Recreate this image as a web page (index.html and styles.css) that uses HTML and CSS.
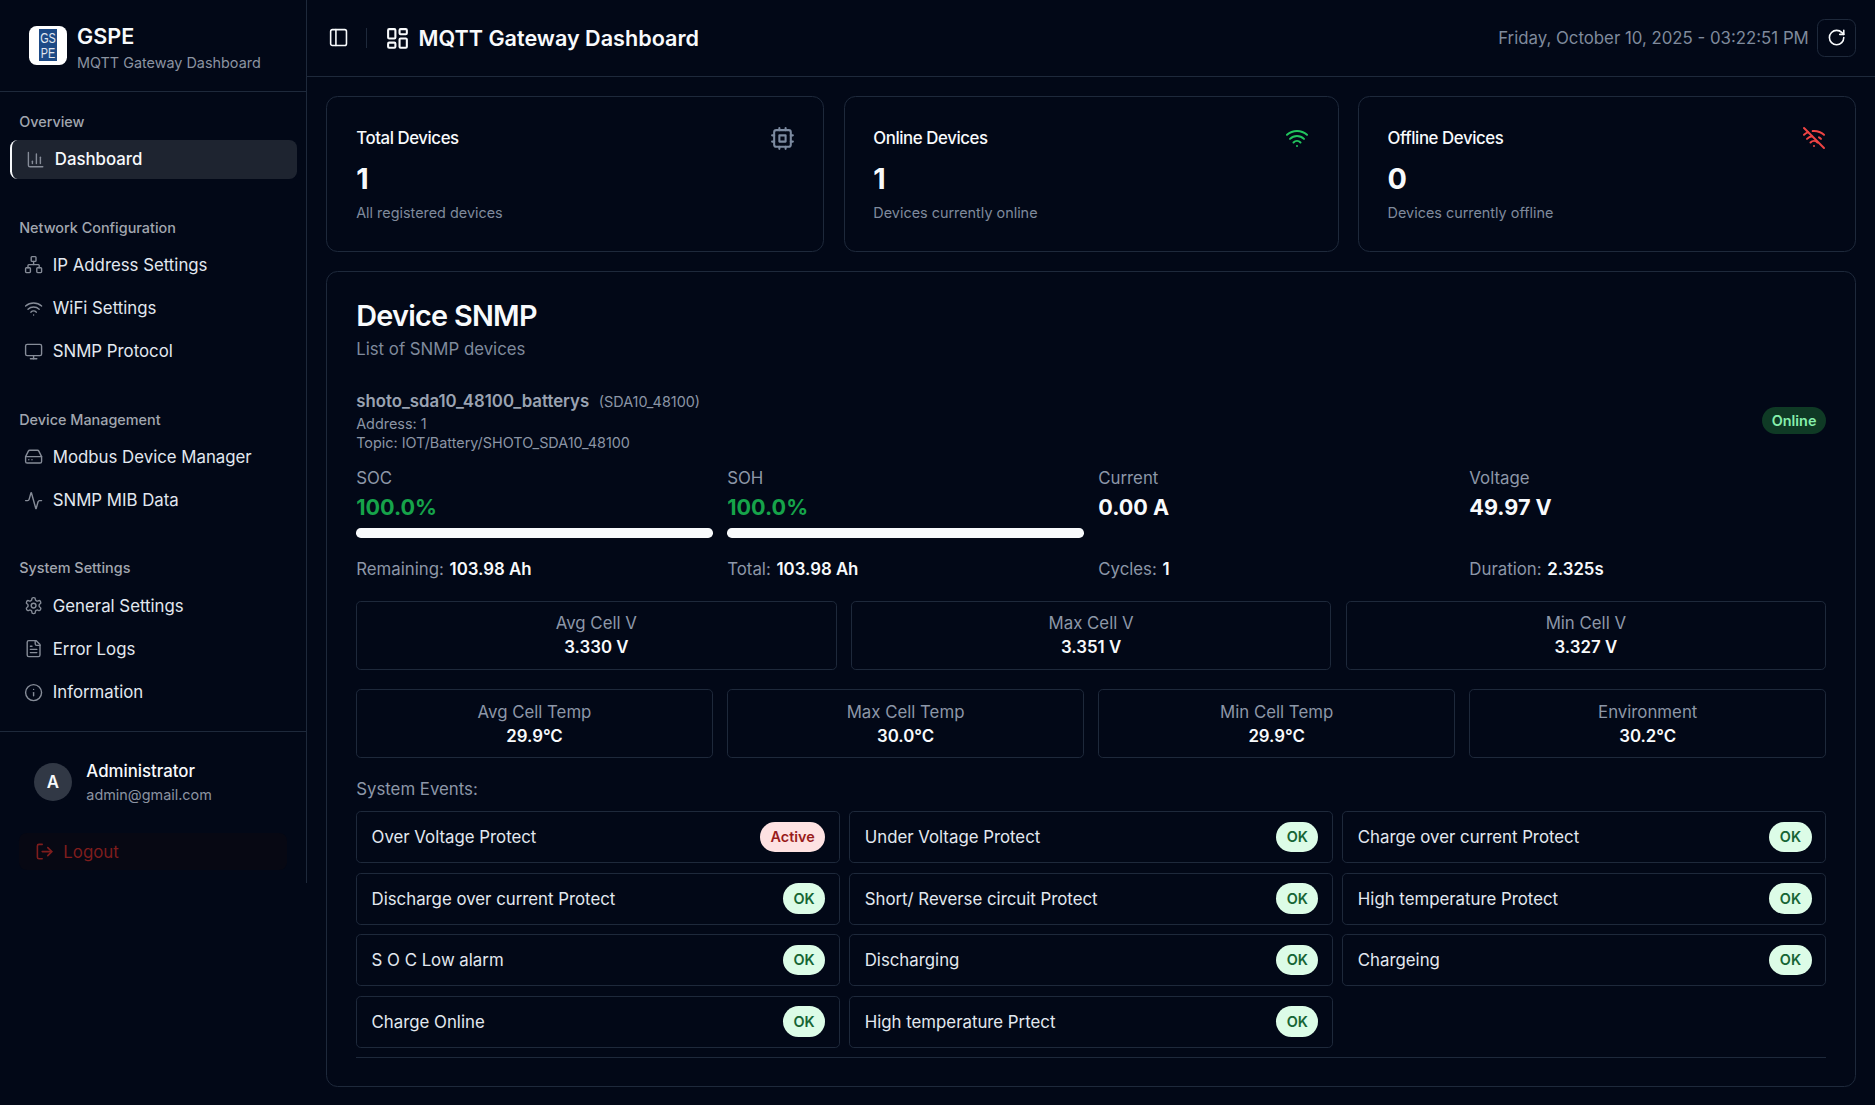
FILE: index.html
```html
<!DOCTYPE html>
<html lang="en">
<head>
    <meta charset="UTF-8">
    <meta name="viewport" content="width=device-width, initial-scale=1.0">
    <title>MQTT Gateway Dashboard</title>
    <link rel="stylesheet" href="styles.css">
</head>
<body>
    <svg class="sprite" width="0" height="0" aria-hidden="true">
        <symbol id="i-chart" viewBox="0 0 24 24"><path d="M3 3v16a2 2 0 0 0 2 2h16"/><path d="M18 17V9"/><path d="M13 17V5"/><path d="M8 17v-3"/></symbol>
        <symbol id="i-network" viewBox="0 0 24 24"><rect x="16" y="16" width="6" height="6" rx="1"/><rect x="2" y="16" width="6" height="6" rx="1"/><rect x="9" y="2" width="6" height="6" rx="1"/><path d="M5 16v-3a1 1 0 0 1 1-1h12a1 1 0 0 1 1 1v3"/><path d="M12 12V8"/></symbol>
        <symbol id="i-wifi" viewBox="0 0 24 24"><path d="M12 20h.01"/><path d="M2 8.82a15 15 0 0 1 20 0"/><path d="M5 12.859a10 10 0 0 1 14 0"/><path d="M8.5 16.429a5 5 0 0 1 7 0"/></symbol>
        <symbol id="i-wifi-off" viewBox="0 0 24 24"><path d="M12 20h.01"/><path d="M8.5 16.429a5 5 0 0 1 7 0"/><path d="M5 12.859a10 10 0 0 1 5.17-2.69"/><path d="M19 12.859a10 10 0 0 0-2.007-1.523"/><path d="M2 8.82a15 15 0 0 1 4.177-2.643"/><path d="M22 8.82a15 15 0 0 0-11.288-3.764"/><path d="m2 2 20 20"/></symbol>
        <symbol id="i-monitor" viewBox="0 0 24 24"><rect x="2" y="3" width="20" height="14" rx="2"/><path d="M8 21h8"/><path d="M12 17v4"/></symbol>
        <symbol id="i-drive" viewBox="0 0 24 24"><path d="M22 12H2"/><path d="M5.45 5.11 2 12v6a2 2 0 0 0 2 2h16a2 2 0 0 0 2-2v-6l-3.45-6.89A2 2 0 0 0 16.76 4H7.24a2 2 0 0 0-1.79 1.11z"/><path d="M6 16h.01"/><path d="M10 16h.01"/></symbol>
        <symbol id="i-activity" viewBox="0 0 24 24"><path d="M22 12h-2.48a2 2 0 0 0-1.93 1.46l-2.35 8.36a.25.25 0 0 1-.48 0L9.24 2.18a.25.25 0 0 0-.48 0l-2.35 8.36A2 2 0 0 1 4.49 12H2"/></symbol>
        <symbol id="i-settings" viewBox="0 0 24 24"><path d="M12.22 2h-.44a2 2 0 0 0-2 2v.18a2 2 0 0 1-1 1.73l-.43.25a2 2 0 0 1-2 0l-.15-.08a2 2 0 0 0-2.73.73l-.22.38a2 2 0 0 0 .73 2.73l.15.1a2 2 0 0 1 1 1.72v.51a2 2 0 0 1-1 1.74l-.15.09a2 2 0 0 0-.73 2.73l.22.38a2 2 0 0 0 2.73.73l.15-.08a2 2 0 0 1 2 0l.43.25a2 2 0 0 1 1 1.73V20a2 2 0 0 0 2 2h.44a2 2 0 0 0 2-2v-.18a2 2 0 0 1 1-1.73l.43-.25a2 2 0 0 1 2 0l.15.08a2 2 0 0 0 2.73-.73l.22-.39a2 2 0 0 0-.73-2.73l-.15-.08a2 2 0 0 1-1-1.74v-.5a2 2 0 0 1 1-1.74l.15-.09a2 2 0 0 0 .73-2.73l-.22-.38a2 2 0 0 0-2.73-.73l-.15.08a2 2 0 0 1-2 0l-.43-.25a2 2 0 0 1-1-1.73V4a2 2 0 0 0-2-2z"/><circle cx="12" cy="12" r="3"/></symbol>
        <symbol id="i-file" viewBox="0 0 24 24"><path d="M15 2H6a2 2 0 0 0-2 2v16a2 2 0 0 0 2 2h12a2 2 0 0 0 2-2V7Z"/><path d="M14 2v4a2 2 0 0 0 2 2h4"/><path d="M10 9H8"/><path d="M16 13H8"/><path d="M16 17H8"/></symbol>
        <symbol id="i-info" viewBox="0 0 24 24"><circle cx="12" cy="12" r="10"/><path d="M12 16v-4"/><path d="M12 8h.01"/></symbol>
        <symbol id="i-logout" viewBox="0 0 24 24"><path d="M9 21H5a2 2 0 0 1-2-2V5a2 2 0 0 1 2-2h4"/><path d="m16 17 5-5-5-5"/><path d="M21 12H9"/></symbol>
        <symbol id="i-panel" viewBox="0 0 24 24"><rect x="3" y="3" width="18" height="18" rx="2"/><path d="M9 3v18"/></symbol>
        <symbol id="i-layout" viewBox="0 0 24 24"><rect x="3" y="3" width="7" height="9" rx="1"/><rect x="14" y="3" width="7" height="5" rx="1"/><rect x="14" y="12" width="7" height="9" rx="1"/><rect x="3" y="16" width="7" height="5" rx="1"/></symbol>
        <symbol id="i-refresh" viewBox="0 0 24 24"><path d="M21 12a9 9 0 1 1-9-9c2.52 0 4.93 1 6.74 2.74L21 8"/><path d="M21 3v5h-5"/></symbol>
        <symbol id="i-cpu" viewBox="0 0 24 24"><rect x="4" y="4" width="16" height="16" rx="2"/><rect x="9" y="9" width="6" height="6"/><path d="M15 2v2"/><path d="M15 20v2"/><path d="M2 15h2"/><path d="M2 9h2"/><path d="M20 15h2"/><path d="M20 9h2"/><path d="M9 2v2"/><path d="M9 20v2"/></symbol>
    </svg>

    <div class="app">
        <aside class="sidebar">
            <div class="brand">
                <div class="logo"><div class="logo-mark"><span>GS<br>PE</span></div></div>
                <div class="brand-text">
                    <div class="brand-name">GSPE</div>
                    <div class="brand-sub">MQTT Gateway Dashboard</div>
                </div>
            </div>

            <nav class="nav">
                <div class="nav-group">
                    <div class="nav-label">Overview</div>
                    <a class="nav-item active"><svg class="icon"><use href="#i-chart"/></svg>Dashboard</a>
                </div>
                <div class="nav-group">
                    <div class="nav-label">Network Configuration</div>
                    <a class="nav-item"><svg class="icon"><use href="#i-network"/></svg>IP Address Settings</a>
                    <a class="nav-item"><svg class="icon"><use href="#i-wifi"/></svg>WiFi Settings</a>
                    <a class="nav-item"><svg class="icon"><use href="#i-monitor"/></svg>SNMP Protocol</a>
                </div>
                <div class="nav-group">
                    <div class="nav-label">Device Management</div>
                    <a class="nav-item"><svg class="icon"><use href="#i-drive"/></svg>Modbus Device Manager</a>
                    <a class="nav-item"><svg class="icon"><use href="#i-activity"/></svg>SNMP MIB Data</a>
                </div>
                <div class="nav-group">
                    <div class="nav-label">System Settings</div>
                    <a class="nav-item"><svg class="icon"><use href="#i-settings"/></svg>General Settings</a>
                    <a class="nav-item"><svg class="icon"><use href="#i-file"/></svg>Error Logs</a>
                    <a class="nav-item"><svg class="icon"><use href="#i-info"/></svg>Information</a>
                </div>
            </nav>

            <div class="sidebar-footer">
                <div class="user">
                    <div class="avatar">A</div>
                    <div>
                        <div class="user-name">Administrator</div>
                        <div class="user-mail">admin@gmail.com</div>
                    </div>
                </div>
                <a class="logout"><svg class="icon"><use href="#i-logout"/></svg>Logout</a>
            </div>
        </aside>

        <div class="main">
            <header class="topbar">
                <svg class="icon toggle"><use href="#i-panel"/></svg>
                <span class="divider"></span>
                <svg class="icon page-icon"><use href="#i-layout"/></svg>
                <h1>MQTT Gateway Dashboard</h1>
                <span class="clock">Friday, October 10, 2025 - 03:22:51 PM</span>
                <button class="refresh"><svg class="icon"><use href="#i-refresh"/></svg></button>
            </header>

            <main class="content">
                <section class="stats">
                    <div class="card stat">
                        <div class="stat-top"><span>Total Devices</span><svg class="icon stat-icon slate"><use href="#i-cpu"/></svg></div>
                        <div class="stat-value">1</div>
                        <div class="stat-sub">All registered devices</div>
                    </div>
                    <div class="card stat">
                        <div class="stat-top"><span>Online Devices</span><svg class="icon stat-icon green"><use href="#i-wifi"/></svg></div>
                        <div class="stat-value">1</div>
                        <div class="stat-sub">Devices currently online</div>
                    </div>
                    <div class="card stat">
                        <div class="stat-top"><span>Offline Devices</span><svg class="icon stat-icon red"><use href="#i-wifi-off"/></svg></div>
                        <div class="stat-value">0</div>
                        <div class="stat-sub">Devices currently offline</div>
                    </div>
                </section>

                <section class="card device-card">
                    <h2>Device SNMP</h2>
                    <p class="muted">List of SNMP devices</p>

                    <div class="device-head">
                        <div>
                            <div class="device-title"><strong>shoto_sda10_48100_batterys</strong><span>(SDA10_48100)</span></div>
                            <div class="device-meta">Address: 1</div>
                            <div class="device-meta">Topic: IOT/Battery/SHOTO_SDA10_48100</div>
                        </div>
                        <span class="online">Online</span>
                    </div>

                    <div class="grid-4 metrics">
                        <div>
                            <div class="metric-label">SOC</div>
                            <div class="metric-value good">100.0%</div>
                            <div class="bar"></div>
                        </div>
                        <div>
                            <div class="metric-label">SOH</div>
                            <div class="metric-value good">100.0%</div>
                            <div class="bar"></div>
                        </div>
                        <div>
                            <div class="metric-label">Current</div>
                            <div class="metric-value">0.00 A</div>
                        </div>
                        <div>
                            <div class="metric-label">Voltage</div>
                            <div class="metric-value">49.97 V</div>
                        </div>
                    </div>

                    <div class="grid-4 totals">
                        <div>Remaining: <b>103.98 Ah</b></div>
                        <div>Total: <b>103.98 Ah</b></div>
                        <div>Cycles: <b>1</b></div>
                        <div>Duration: <b>2.325s</b></div>
                    </div>

                    <div class="grid-3 boxes cell-volts">
                        <div class="box"><span>Avg Cell V</span><b>3.330 V</b></div>
                        <div class="box"><span>Max Cell V</span><b>3.351 V</b></div>
                        <div class="box"><span>Min Cell V</span><b>3.327 V</b></div>
                    </div>

                    <div class="grid-4 boxes cell-temps">
                        <div class="box"><span>Avg Cell Temp</span><b>29.9°C</b></div>
                        <div class="box"><span>Max Cell Temp</span><b>30.0°C</b></div>
                        <div class="box"><span>Min Cell Temp</span><b>29.9°C</b></div>
                        <div class="box"><span>Environment</span><b>30.2°C</b></div>
                    </div>

                    <div class="events-title">System Events:</div>
                    <div class="events">
                        <div class="event">Over Voltage Protect<span class="pill danger">Active</span></div>
                        <div class="event">Under Voltage Protect<span class="pill">OK</span></div>
                        <div class="event">Charge over current Protect<span class="pill">OK</span></div>
                        <div class="event">Discharge over current Protect<span class="pill">OK</span></div>
                        <div class="event">Short/ Reverse circuit Protect<span class="pill">OK</span></div>
                        <div class="event">High temperature Protect<span class="pill">OK</span></div>
                        <div class="event">S O C Low alarm<span class="pill">OK</span></div>
                        <div class="event">Discharging<span class="pill">OK</span></div>
                        <div class="event">Chargeing<span class="pill">OK</span></div>
                        <div class="event">Charge Online<span class="pill">OK</span></div>
                        <div class="event">High temperature Prtect<span class="pill">OK</span></div>
                    </div>
                </section>
            </main>
        </div>
    </div>
</body>
</html>
```

FILE: styles.css
```css
html {
    font-size: 19.2px;
}
body {
    font-family: 'Inter', 'Liberation Sans', sans-serif;
    margin: 0;
    height: 100vh;
    overflow: hidden;
    background-color: #020817;
    color: #f8fafc;
    font-size: 0.875rem;
    line-height: 1.25rem;
}
h1, h2, p {
    margin: 0;
}
.sprite {
    position: absolute;
}
.icon {
    width: 1rem;
    height: 1rem;
    flex: none;
    fill: none;
    stroke: currentColor;
    stroke-width: 2;
    stroke-linecap: round;
    stroke-linejoin: round;
}
.app {
    display: flex;
    align-items: flex-start;
    height: 100%;
}

/* sidebar */
.sidebar {
    width: 16rem;
    box-sizing: border-box;
    flex: none;
    border-right: 1px solid #1e293b;
}
.brand {
    display: flex;
    align-items: center;
    gap: 0.5rem;
    height: 91px;
    padding-left: 29px;
    border-bottom: 1px solid #1e293b;
}
.brand-text {
    padding-top: 5px;
}
.logo {
    width: 2rem;
    height: 2rem;
    border-radius: 0.4rem;
    background-color: #ffffff;
    display: flex;
    align-items: center;
    justify-content: center;
}
.logo-mark {
    width: 18px;
    height: 32px;
    background-color: #1d4a86;
    color: #e2e8f0;
    font-family: 'Liberation Sans', sans-serif;
    font-size: 15px;
    line-height: 15px;
    text-align: center;
    overflow: hidden;
}
.logo-mark span {
    display: block;
    margin: 1px -4px 0;
    transform: scaleX(0.72);
}
.brand-name {
    font-size: 1.125rem;
    line-height: 1.4rem;
    font-weight: 600;
}
.brand-sub {
    margin-top: 0.15rem;
    font-size: 0.75rem;
    line-height: 1.1rem;
    color: #8b93a1;
}
.nav {
    padding: calc(0.55rem + 0.3px) 0.5rem calc(1rem + 0.7px);
    display: flex;
    flex-direction: column;
    gap: calc(1.5rem + 1px);
}
.nav-label {
    height: 2rem;
    padding-left: 0.5rem;
    display: flex;
    align-items: center;
    font-size: 0.75rem;
    font-weight: 500;
    color: #a1a6af;
}
.nav-group {
    display: flex;
    flex-direction: column;
    gap: 0.25rem;
}
.nav-label + .nav-item {
    margin-top: calc(-0.25rem - 1px);
}
.nav-item {
    height: 2rem;
    display: flex;
    align-items: center;
    gap: 0.5rem;
    padding-left: 0.75rem;
    border-radius: 0.4rem;
    color: #e2e8f0;
}
.nav-item .icon {
    color: #868c98;
    stroke-width: 1.75;
}
.nav-item.active {
    background-color: #1e2430;
    border-left: 2px solid #f8fafc;
    font-weight: 500;
    color: #f8fafc;
}
.sidebar-footer {
    border-top: 1px solid #1e293b;
    padding: calc(1.65rem - 1px) 1rem 0.65rem;
}
.user {
    height: 2rem;
    display: flex;
    align-items: center;
    gap: 0.75rem;
    padding-left: 0.75rem;
}
.avatar {
    width: 2rem;
    height: 2rem;
    border-radius: 50%;
    background-color: #313845;
    display: flex;
    align-items: center;
    justify-content: center;
    font-weight: 600;
}
.user-name {
    font-weight: 500;
    line-height: 1.25rem;
}
.user-mail {
    margin-top: 1.5px;
    font-size: 0.75rem;
    line-height: 1.05rem;
    color: #8b93a1;
}
.logout {
    margin-top: 1.65rem;
    height: 1.95rem;
    display: flex;
    align-items: center;
    gap: 0.5rem;
    padding-left: 0.8rem;
    border-radius: 0.4rem;
    background-color: #070813;
    color: #7f1d1d;
}

/* top bar */
.main {
    flex: 1;
    min-width: 0;
}
.topbar {
    height: 76px;
    display: flex;
    align-items: center;
    padding: 0 1rem 0 1.1rem;
    border-bottom: 1px solid #1e293b;
}
.toggle {
    width: 1.1rem;
    height: 1.1rem;
    stroke-width: 1.8;
}
.divider {
    width: 1px;
    height: 1.05rem;
    background-color: #1e293b;
    margin: 0 0.95rem 0 0.85rem;
}
.page-icon {
    width: 1.3rem;
    height: 1.3rem;
    margin-right: 0.45rem;
}
.topbar h1 {
    font-size: 1.125rem;
    font-weight: 600;
}
.clock {
    margin-left: auto;
    color: #7f8a9c;
}
.refresh {
    width: 2rem;
    height: 2rem;
    margin-left: 0.45rem;
    padding: 0;
    display: flex;
    align-items: center;
    justify-content: center;
    background: none;
    border: 1px solid #1e293b;
    border-radius: 0.4rem;
    color: #f8fafc;
}

/* content */
.content {
    padding: 1rem 1rem 0;
    display: flex;
    flex-direction: column;
    gap: 1rem;
}
.card {
    border: 1px solid #1e293b;
    border-radius: 0.6rem;
    padding: 1.5rem;
}
.stats {
    display: grid;
    grid-template-columns: 1.002fr 0.996fr 1.002fr;
    gap: 1rem;
}
.stat-top {
    display: flex;
    justify-content: space-between;
    align-items: center;
    height: 1.25rem;
    font-weight: 500;
    letter-spacing: -0.025em;
}
.stat-icon {
    width: 1.25rem;
    height: 1.25rem;
}
.stat-icon.slate {
    width: 1.3rem;
    height: 1.3rem;
    color: #7c8aa0;
}
.green { color: #22c55e; }
.red { color: #ef4444; }
.stat-value {
    margin-top: 0.5rem;
    font-size: 1.5rem;
    line-height: 2rem;
    font-weight: 700;
}
.stat-sub {
    margin-top: 0.25rem;
    font-size: 0.75rem;
    line-height: 1rem;
    color: #7f8a9c;
}
.device-card h2 {
    padding-top: 1px;
    font-size: 1.5rem;
    line-height: 1.5rem;
    font-weight: 600;
    letter-spacing: -0.025em;
}
.muted {
    margin-top: calc(0.4rem - 1px);
    color: #7f8a9c;
}
.device-head {
    margin-top: 1.45rem;
    display: flex;
    justify-content: space-between;
    align-items: center;
}
.device-title strong {
    font-weight: 600;
    color: #9aa3b2;
}
.device-title span {
    margin-left: 0.5rem;
    font-size: 0.75rem;
    color: #8b95a5;
}
.device-meta {
    font-size: 0.75rem;
    line-height: 1rem;
    color: #8b95a5;
}
.online {
    padding: 0.2rem 0.5rem;
    border-radius: 1rem;
    background-color: #0f3a25;
    color: #86efac;
    font-size: 0.75rem;
    line-height: 1rem;
    font-weight: 600;
}
.grid-4, .grid-3 {
    display: grid;
    gap: 0.75rem;
}
.grid-4 {
    grid-template-columns: repeat(4, 1fr);
}
.grid-3 {
    grid-template-columns: repeat(3, 1fr);
}
.metrics {
    margin-top: 0.7rem;
}
.metric-label {
    color: #8d97a8;
}
.metric-value {
    margin-top: calc(0.1rem + 1px);
    font-size: 1.125rem;
    line-height: 1.5rem;
    font-weight: 700;
}
.good {
    color: #16a34a;
}
.bar {
    margin-top: calc(0.4rem - 1px);
    height: 0.5rem;
    border-radius: 0.25rem;
    background-color: #f8fafc;
}
.totals {
    margin-top: 1rem;
    color: #8d97a8;
}
.totals b {
    margin-left: 1px;
    color: #f8fafc;
    font-weight: 600;
}
.cell-volts {
    margin-top: calc(1rem + 0.8px);
}
.cell-temps {
    margin-top: calc(1rem - 0.8px);
}
.box {
    border: 1px solid #1e293b;
    border-radius: 0.25rem;
    padding: calc(0.5rem + 0.6px) 0.5rem calc(0.5rem - 0.6px);
    display: flex;
    flex-direction: column;
    align-items: center;
    color: #8d97a8;
}
.cell-volts .box {
    padding-top: calc(0.5rem - 0.4px);
    padding-bottom: calc(0.5rem + 0.4px);
}
.box b {
    color: #f8fafc;
    font-weight: 600;
}
.events-title {
    margin-top: 1rem;
    color: #8d97a8;
}
.events {
    margin-top: calc(0.5rem + 0.5px);
    display: grid;
    grid-template-columns: repeat(3, 1fr);
    gap: 0.5rem;
    padding-bottom: calc(0.5rem - 0.5px);
    border-bottom: 1px solid #1e293b;
}
.event {
    display: flex;
    justify-content: space-between;
    align-items: center;
    padding: 0.5rem 0.7rem 0.5rem 0.75rem;
    border: 1px solid #1e293b;
    border-radius: 0.25rem;
    color: #e2e8f0;
}
.pill {
    height: 1.6rem;
    padding: 0 0.55rem;
    display: flex;
    align-items: center;
    border-radius: 1rem;
    background-color: #dcfce7;
    color: #166534;
    font-size: 0.75rem;
    font-weight: 600;
}
.pill.danger {
    background-color: #fee2e2;
    color: #991b1b;
}
```
